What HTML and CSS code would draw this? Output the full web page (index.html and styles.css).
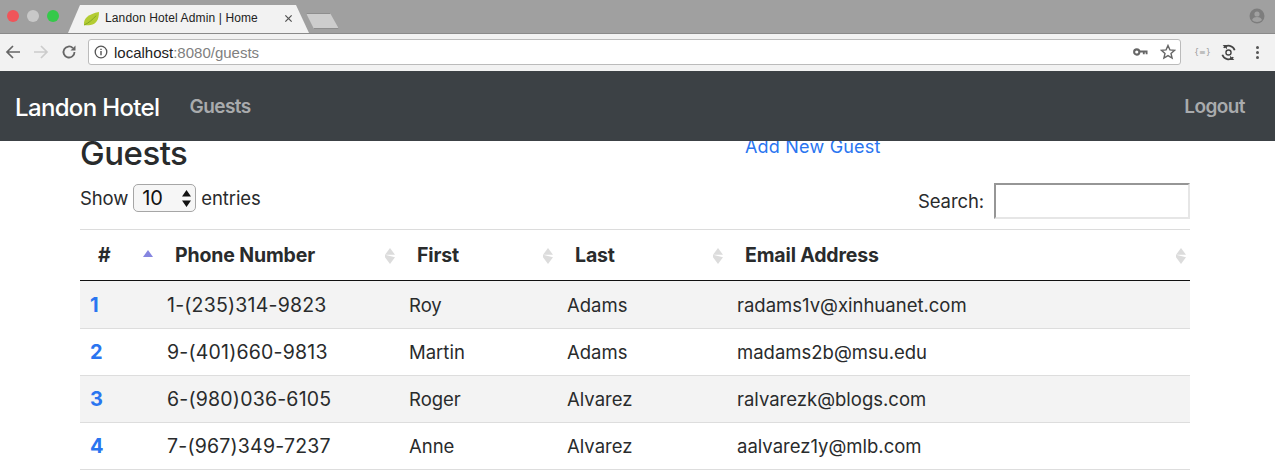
FILE: index.html
```html
<!DOCTYPE html>
<html lang="en">
<head>
<meta charset="utf-8">
<title>Landon Hotel Admin | Home</title>
<link rel="stylesheet" href="styles.css">
</head>
<body>
<div class="tabbar">
  <div class="lights"><i class="light red"></i><i class="light grey"></i><i class="light green"></i></div>
  <div class="tab">
    <svg class="favicon" viewBox="0 0 18 16"><path d="M1 15C0 8 6 3 17 1c0 8-3 13-9 14-3 .4-5 .2-7 0z" fill="#b3cc33"/><path d="M1 15C6 13 10 9 14 5" stroke="#7fa526" stroke-width="1" fill="none"/></svg>
    <span class="tab-title">Landon Hotel Admin | Home</span>
    <svg class="tab-close" viewBox="0 0 10 10"><path d="M1.500 1.500l7 7M8.500 1.500l-7 7" stroke="#555" stroke-width="1.400"/></svg>
  </div>
  <div class="newtab"></div>
  <svg class="profile" viewBox="0 0 16 16"><circle cx="8" cy="8" r="7.500" fill="#7d7d7d"/><circle cx="8" cy="6" r="2.600" fill="#a0a0a0"/><path d="M3 12c1-2.400 3-3 5-3s4 .6 5 3c-1.200 1.300-3 2-5 2s-3.800-.7-5-2z" fill="#a0a0a0"/></svg>
</div>
<div class="toolbar">
  <svg class="tool" viewBox="0 0 16 16"><path d="M15 8H2M8 2L2 8l6 6" stroke="#666" stroke-width="1.700" fill="none"/></svg>
  <svg class="tool" viewBox="0 0 16 16"><path d="M1 8h13M8 2l6 6-6 6" stroke="#ccc" stroke-width="1.700" fill="none"/></svg>
  <svg class="tool" viewBox="0 0 16 16"><path d="M13.500 8a5.500 5.500 0 1 1-1.600-3.900" stroke="#666" stroke-width="1.800" fill="none"/><path d="M14.500 1.500v5h-5z" fill="#666"/></svg>
  <div class="omnibox">
    <svg class="info" viewBox="0 0 14 14"><circle cx="7" cy="7" r="5.800" stroke="#555" stroke-width="1.300" fill="none"/><path d="M7 6v4.200M7 3.700v1.300" stroke="#555" stroke-width="1.400"/></svg>
    <span class="url">localhost<span class="url-dim">:8080/guests</span></span>
    <svg class="key" viewBox="0 0 16 10"><circle cx="4" cy="5" r="2.800" stroke="#666" stroke-width="2.200" fill="none"/><path d="M7 4.500h8.500M11.500 4.500v3M14.500 4.500v3" stroke="#666" stroke-width="2" fill="none"/></svg>
    <svg class="star" viewBox="0 0 16 16"><path d="M8 1.500l1.900 4.400 4.700.4-3.600 3.100 1.100 4.600L8 11.600 3.900 14l1.100-4.600L1.400 6.300l4.700-.4z" stroke="#666" stroke-width="1.400" fill="none"/></svg>
  </div>
  <div class="ext-json">{≡}</div>
  <svg class="ext-sync" viewBox="0 0 16 16"><path d="M3.500 3.500a6.200 6.200 0 0 1 10.300 2.300M12.500 12.500a6.200 6.200 0 0 1-10.300-2.300" stroke="#444" stroke-width="1.600" fill="none"/><path d="M2.500 1h4v4zM13.500 15h-4v-4z" fill="#444"/><circle cx="8" cy="8" r="2.400" stroke="#444" stroke-width="1.300" fill="none"/></svg>
  <div class="menu-dots"><i></i><i></i><i></i></div>
</div>
<nav class="navbar">
  <a class="brand">Landon Hotel</a>
  <a class="nav-link">Guests</a>
  <a class="nav-link logout">Logout</a>
</nav>
<main class="container">
  <div class="head-row">
    <h1>Guests</h1>
    <a class="add-link">Add New Guest</a>
  </div>
  <div class="controls">
    <div class="length">Show <span class="fake-select"><span>10</span><svg viewBox="0 0 9 17"><path d="M4.500 0L9 6.500H0zM4.500 17L0 10.500h9z" fill="#111"/></svg></span> entries</div>
    <div class="search">Search: <span class="search-box"></span></div>
  </div>
  <table>
    <thead>
      <tr>
        <th class="c1">#<span class="sort asc"></span></th>
        <th class="c2">Phone Number<span class="sort"></span></th>
        <th class="c3">First<span class="sort"></span></th>
        <th class="c4">Last<span class="sort"></span></th>
        <th class="c5">Email Address<span class="sort"></span></th>
      </tr>
    </thead>
    <tbody>
      <tr class="odd"><td class="id">1</td><td class="phone">1-(235)314-9823</td><td>Roy</td><td>Adams</td><td>radams1v@xinhuanet.com</td></tr>
      <tr><td class="id">2</td><td class="phone">9-(401)660-9813</td><td>Martin</td><td>Adams</td><td>madams2b@msu.edu</td></tr>
      <tr class="odd"><td class="id">3</td><td class="phone">6-(980)036-6105</td><td>Roger</td><td>Alvarez</td><td>ralvarezk@blogs.com</td></tr>
      <tr><td class="id">4</td><td class="phone">7-(967)349-7237</td><td>Anne</td><td>Alvarez</td><td>aalvarez1y@mlb.com</td></tr>
    </tbody>
  </table>
</main>
</body>
</html>
```
FILE: styles.css
```css
* { box-sizing: border-box; }
html, body { margin: 0; height: 471px; overflow: hidden; background: #fff; }
body { font-family: "Inter", "Liberation Sans", sans-serif; color: #292b2c; }

.tabbar { height: 33px; background: #a0a0a0; display: flex; align-items: flex-start; position: relative; }
.lights { display: flex; gap: 8px; padding: 10px 0 0 7px; width: 68px; }
.light { width: 12px; height: 12px; border-radius: 50%; display: block; }
.red { background: #f0555a; }
.grey { background: #c8c8c8; }
.green { background: #35c94a; }
.tab { margin-top: 5px; height: 28px; width: 241px; background: #f2f2f2; display: flex; align-items: center; padding: 0 16px 2px 15px;
  clip-path: polygon(0 100%, 12px 0, 228px 0, 241px 100%); }
.favicon { width: 17px; height: 15px; margin-right: 5px; flex: none; }
.tab-title { font: 12px "Liberation Sans", sans-serif; color: #222; white-space: nowrap; letter-spacing: .12px; flex: 1; }
.tab-close { width: 9px; height: 9px; flex: none; }
.newtab { width: 33px; height: 16px; margin: 13px 0 0 -3px; background: #cdcdcd; border: 1px solid #8e8e8e; clip-path: polygon(0 0, 24px 0, 33px 100%, 8px 100%); }
.profile { width: 16px; height: 16px; position: absolute; right: 10px; top: 8px; }

.toolbar { height: 38px; background: #f2f2f2; border-top: 1px solid #8a8a8a; display: flex; align-items: center; padding: 0 0 1px 5px; }
.tool { width: 16px; height: 16px; margin-right: 12px; flex: none; }
.omnibox { width: 1093px; height: 26px; margin-left: -1px; background: #fff; border: 1px solid #bbb; border-radius: 3px; display: flex; align-items: center; padding: 0 4px 0 5px; }
.info { width: 14px; height: 14px; margin-right: 6px; }
.url { font: 15px "Liberation Sans", sans-serif; color: #222; flex: 1; }
.url-dim { color: #808080; }
.key { width: 15px; height: 10px; margin-right: 12px; }
.star { width: 16px; height: 16px; }
.ext-json { width: 14px; margin-left: 13px; font: 8px "DejaVu Sans", sans-serif; color: #999; white-space: nowrap; }
.ext-sync { width: 17px; height: 17px; margin-left: 12px; }
.menu-dots { display: flex; flex-direction: column; gap: 2px; margin-left: 19px; }
.menu-dots i { display: block; width: 3px; height: 3px; border-radius: 50%; background: #555; }

.navbar { height: 70px; background: #3c4145; display: flex; align-items: center; padding: 0 30px 0 15px; position: relative; z-index: 2; }
.brand { font-size: 24px; font-weight: 500; letter-spacing: -.65px; color: #fff; margin-right: 30px; padding-top: 2px; }
.nav-link { font-size: 19px; font-weight: 600; letter-spacing: -.55px; color: #a9abad; }
.logout { margin-left: auto; }

.container { width: 1110px; margin: -7px 0 0 80px; }
.head-row { display: flex; height: 49px; }
h1 { margin: 0; width: 665px; margin-top: -1px; font-size: 33px; line-height: 40px; font-weight: 500; letter-spacing: -.5px; height: 40px; }
.add-link { font-size: 18px; line-height: 26px; color: #2a75f0; letter-spacing: .2px; }
.controls { display: flex; justify-content: space-between; height: 46px; font-size: 18.500px; letter-spacing: -.1px; }
.length { display: flex; align-items: center; gap: 5px; height: 30px; }
.fake-select { width: 63px; height: 28px; border: 1px solid #a6a6a6; border-radius: 5px; background: #f6f6f6; display: flex; align-items: center; justify-content: space-between; padding: 0 4px 0 8px; color: #111; font-size: 20px; }
.fake-select svg { width: 9px; height: 17px; }
.search { display: flex; align-items: center; gap: 10px; height: 36px; }
.search-box { width: 196px; height: 36px; border: 2px solid; border-color: #969696 #e6e6e6 #e6e6e6 #969696; }

table { width: 1110px; border-collapse: collapse; table-layout: fixed; font-size: 18.500px; }
th { height: 51px; border-top: 1px solid #dcdcdc; border-bottom: 1px solid #111; font-weight: 700; font-size: 19.500px; text-align: left; padding: 0 0 0 18px; position: relative; color: #292b2c; letter-spacing: -.15px; }
td { height: 47px; padding: 0 0 0 10px; border-bottom: 1px solid #ddd; }
tbody tr:first-child td { height: 48px; }
.odd td { background: #f3f3f3; }
.id { color: #2a75f0; font-weight: 700; font-size: 20px; }
.phone { font-size: 19.500px; letter-spacing: .2px; }
.c1 { width: 77px; }
.c2 { width: 242px; }
.c3 { width: 158px; }
.c4 { width: 170px; }
.sort { position: absolute; right: 4px; top: 18px; width: 10px; height: 16px; background: #dcdcdc; clip-path: polygon(50% 0, 100% 42%, 0 42%, 0 58%, 100% 58%, 50% 100%, 0 58%, 100% 58%, 0 42%); }
.sort.asc { top: 20px; height: 7px; background: #8585e0; clip-path: polygon(50% 0, 100% 100%, 0 100%); }
```
